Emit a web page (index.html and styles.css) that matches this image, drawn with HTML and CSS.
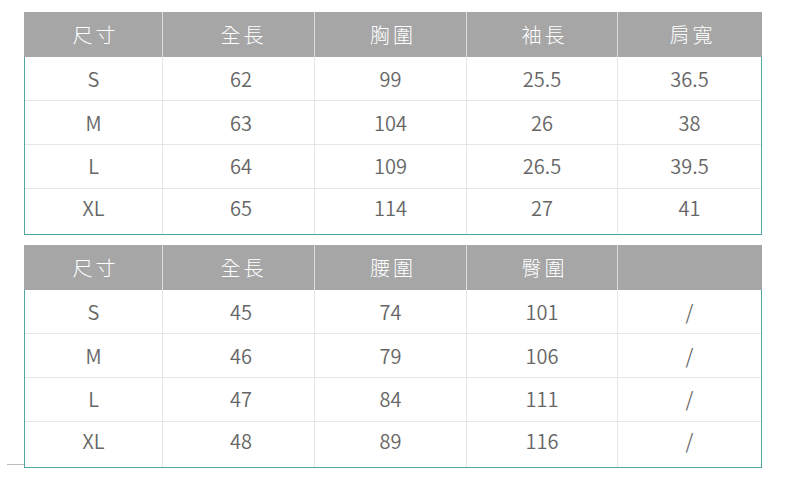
FILE: index.html
```html
<!DOCTYPE html>
<html lang="zh-Hant">
<head>
<meta charset="utf-8">
<title>尺寸表</title>
<link rel="stylesheet" href="styles.css">
</head>
<body>
<div class="page">
  <div class="size-table">
    <div class="thead">
      <div class="th">尺寸</div>
      <div class="th">全長</div>
      <div class="th">胸圍</div>
      <div class="th">袖長</div>
      <div class="th">肩寬</div>
    </div>
    <div class="tbody">
      <div class="td">S</div><div class="td">62</div><div class="td">99</div><div class="td">25.5</div><div class="td">36.5</div>
      <div class="td">M</div><div class="td">63</div><div class="td">104</div><div class="td">26</div><div class="td">38</div>
      <div class="td r3">L</div><div class="td r3">64</div><div class="td r3">109</div><div class="td r3">26.5</div><div class="td r3">39.5</div>
      <div class="td last">XL</div><div class="td last">65</div><div class="td last">114</div><div class="td last">27</div><div class="td last">41</div>
    </div>
  </div>
  <div class="size-table second">
    <div class="thead">
      <div class="th">尺寸</div>
      <div class="th">全長</div>
      <div class="th">腰圍</div>
      <div class="th">臀圍</div>
      <div class="th"></div>
    </div>
    <div class="tbody">
      <div class="td">S</div><div class="td">45</div><div class="td">74</div><div class="td">101</div><div class="td">/</div>
      <div class="td">M</div><div class="td">46</div><div class="td">79</div><div class="td">106</div><div class="td">/</div>
      <div class="td r3">L</div><div class="td r3">47</div><div class="td r3">84</div><div class="td r3">111</div><div class="td r3">/</div>
      <div class="td last">XL</div><div class="td last">48</div><div class="td last">89</div><div class="td last">116</div><div class="td last">/</div>
    </div>
  </div>
</div>
</body>
</html>
```

FILE: styles.css
```css
html, body {
  margin: 0;
  padding: 0;
  background: #ffffff;
}

body {
  font-family: "Noto Sans CJK TC", "Noto Sans", sans-serif;
}

.page {
  padding: 12px 0 0 24px;
  display: flex;
  flex-direction: column;
  gap: 10px;
}

.size-table {
  width: 738px;
  position: relative;
}

.second::before {
  content: "";
  position: absolute;
  left: -17px;
  bottom: 3px;
  width: 17px;
  height: 1px;
  background: #bdbdbd;
}

.thead {
  display: grid;
  grid-template-columns: 138px 152px 152px 151px 145px;
  background: #a6a6a6;
  height: 45px;
}

.th {
  display: flex;
  align-items: center;
  justify-content: center;
  color: #ffffff;
  font-size: 20px;
  font-weight: 300;
  letter-spacing: 3px;
  padding-left: 5px;
  box-sizing: border-box;
}

.th:nth-child(2) {
  padding-left: 10px;
}

.th + .th {
  border-left: 1px solid #dcdcdc;
}

.tbody {
  display: grid;
  grid-template-columns: 137px 152px 152px 151px 144px;
  border: 1px solid #52a6a2;
  border-top: none;
}

.td {
  height: 44px;
  box-sizing: border-box;
  display: flex;
  align-items: center;
  justify-content: center;
  color: #666666;
  font-size: 20px;
  font-weight: 350;
  border-bottom: 1px solid #e6e6e6;
  border-left: 1px solid #e6e6e6;
}

.td:nth-child(5n+1) {
  border-left: none;
}

.td:nth-child(5n+2) {
  padding-left: 5px;
}

.td.r3 {
  padding-bottom: 3px;
}

.td.last {
  height: 45px;
  padding-bottom: 8px;
  border-bottom: none;
}
```
